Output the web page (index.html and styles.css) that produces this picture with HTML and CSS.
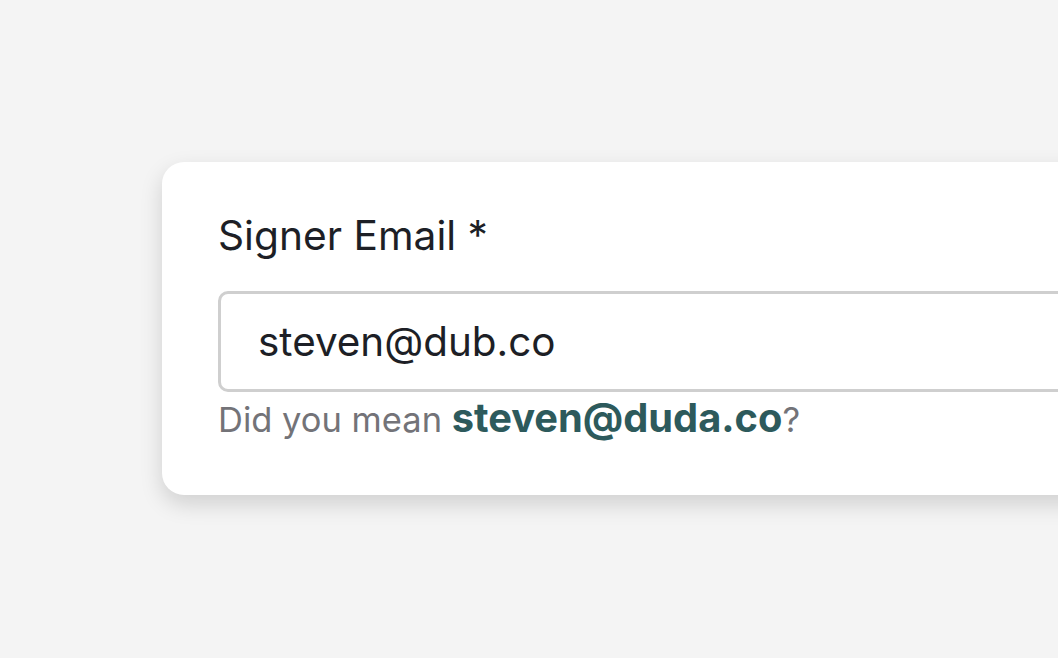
FILE: index.html
```html
<!DOCTYPE html>
<html>
<head>
<meta charset="utf-8">
<link rel="stylesheet" href="styles.css">
</head>
<body>
<div class="page">
  <div class="card">
    <label class="label" for="email">Signer Email *</label>
    <div class="input" id="email">steven@dub.co</div>
    <p class="hint">Did you mean <span class="suggest">steven@duda.co</span>?</p>
  </div>
</div>
</body>
</html>
```
FILE: styles.css
```css
html, body {
  margin: 0;
  padding: 0;
  background: #f4f4f4;
  width: 1058px;
  height: 658px;
  overflow: hidden;
  font-family: Inter, "Noto Sans", sans-serif;
}
.page {
  padding-top: 162px;
  padding-left: 162px;
}
.card {
  background: #fff;
  width: 1000px;
  border-radius: 22px;
  box-shadow: 0 9px 22px rgba(0,0,0,0.15);
  padding: 50px 56px 53px;
  box-sizing: border-box;
}
.label {
  display: block;
  font-size: 40.7px;
  color: #1d1f26;
  line-height: 48px;
}
.input {
  margin-top: 31px;
  height: 101px;
  box-sizing: border-box;
  border: 3px solid #cfcfcf;
  border-radius: 10px;
  padding-left: 37px;
  font-size: 40.4px;
  line-height: 95px;
  color: #1d1f26;
}
.hint {
  margin: 6px 0 0;
  height: 44px;
  font-size: 34.5px;
  line-height: 44px;
  color: #737378;
}
.suggest {
  font-size: 39.8px;
  line-height: 1;
  font-weight: 700;
  color: #2d5a5c;
}
```
